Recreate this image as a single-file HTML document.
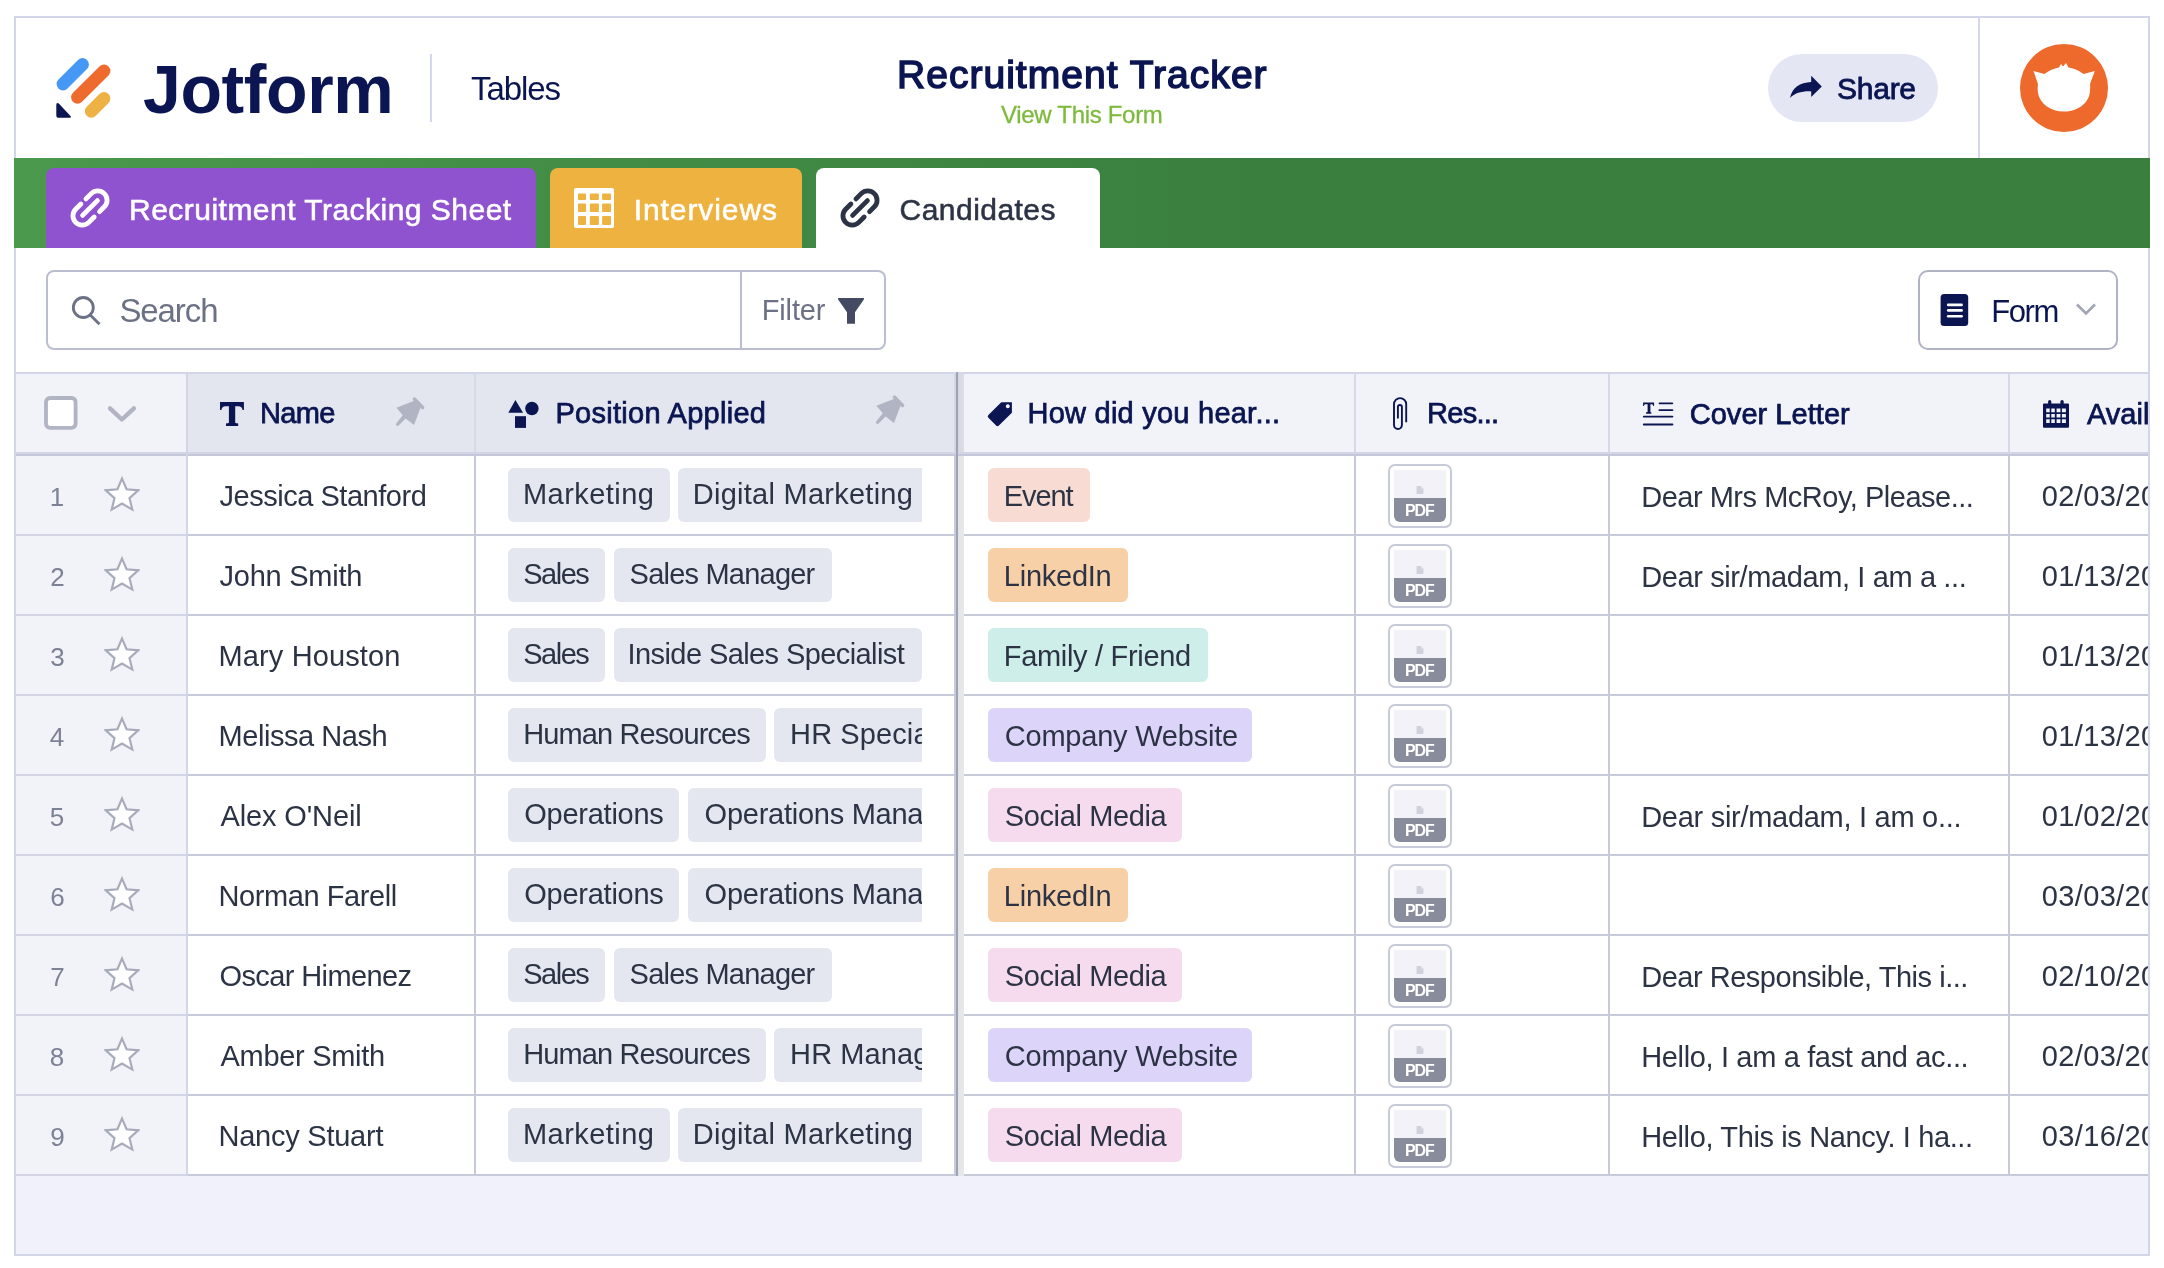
<!DOCTYPE html>
<html><head><meta charset="utf-8"><style>
html,body{margin:0;padding:0;width:2164px;height:1268px;overflow:hidden;background:#fff}
body{position:relative;font-family:"Liberation Sans",sans-serif}
.b{position:absolute}
.t{position:absolute;white-space:nowrap}
</style></head><body><div id="wrap" style="position:absolute;left:0;top:0;width:2164px;height:1268px;will-change:transform;background:#fff">
<div class="b" style="left:14px;top:16px;width:2136px;height:1240px;border:2px solid #d3d5e9;box-sizing:border-box;background:#fff"></div>
<svg class="b" style="left:50px;top:50px;" width="70" height="75" viewBox="50 50 70 75">
<line x1="63" y1="84" x2="82.5" y2="64.5" stroke="#4599f4" stroke-width="12.8" stroke-linecap="round"/>
<line x1="77.5" y1="97.3" x2="104" y2="71" stroke="#ee6b2d" stroke-width="12.8" stroke-linecap="round"/>
<line x1="91.3" y1="111.3" x2="104" y2="98.5" stroke="#eeb143" stroke-width="12.8" stroke-linecap="round"/>
<path d="M58.8,103.6 Q56.3,101.8 56.3,105 L56.3,115.2 Q56.3,117.8 59,117.8 L69,117.8 Q72.3,117.8 70,115.4 Z" fill="#0a1551"/>
</svg>
<div class="t" style="left:143.00px;top:55.40px;font-size:68px;line-height:68px;color:#0a1551;font-weight:700;letter-spacing:-0.383px;">Jotform</div>
<div class="b" style="left:430px;top:54px;width:2px;height:68px;background:#d5d8ec"></div>
<div class="t" style="left:471.00px;top:72.00px;font-size:33px;line-height:33px;color:#0a1551;font-weight:400;letter-spacing:-1.080px;">Tables</div>
<div class="t" style="left:897.00px;top:54.90px;font-size:39px;line-height:39px;color:#0a1551;font-weight:400;letter-spacing:1.028px;-webkit-text-stroke:1.5px #0a1551;">Recruitment Tracker</div>
<div class="t" style="left:1001.00px;top:103.40px;font-size:24px;line-height:24px;color:#7dba3c;font-weight:400;letter-spacing:-0.308px;-webkit-text-stroke:0.3px #7dba3c;">View This Form</div>
<div class="b" style="left:1768px;top:54px;width:170px;height:68px;background:#e4e6f4;border-radius:34px"></div>
<svg class="b" style="left:1780px;top:62px;" width="50" height="50" viewBox="0 0 50 50"><path d="M41.8,24.4 L31.2,13.8 L31.2,20.1 C20,20.5 12,26 10,36.1 C15,31 22,29 31.2,29.4 L31.2,34.9 Z" fill="#0a1551"/></svg>
<div class="t" style="left:1837.00px;top:74.00px;font-size:30px;line-height:30px;color:#0a1551;font-weight:400;letter-spacing:-0.250px;-webkit-text-stroke:0.8px #0a1551;">Share</div>
<div class="b" style="left:1978px;top:18px;width:2px;height:140px;background:#d5d8ec"></div>
<svg class="b" style="left:2014px;top:38px;" width="100" height="100" viewBox="0 0 100 100"><circle cx="50" cy="50" r="44" fill="#ed6a2c"/>
<path d="M19.5,33 L30.5,36 C36,32 41,30 45,29.5 L47,26 L49,28.5 L52,25 L54.5,29.5 C59,30 64,32 69.5,36 L80.8,33 L76,46 C76.5,49 76,52 75.8,55 C74,66 63,73.5 50,73.5 C37,73.5 26,66 24,55 C23.6,52 23.5,49 24,46 Z" fill="#fff"/></svg>
<div class="b" style="left:14px;top:158px;width:2136px;height:90px;background:linear-gradient(90deg,#4a994d 0px,#3a7f3e 1234px,#3a7f3e 100%)"></div>
<div class="b" style="left:46px;top:168px;width:490px;height:80px;background:#9053cf;border-radius:8px 8px 0 0"></div>
<div class="b" style="left:550px;top:168px;width:252px;height:80px;background:#eeb241;border-radius:8px 8px 0 0"></div>
<div class="b" style="left:816px;top:168px;width:284px;height:80px;background:#fff;border-radius:8px 8px 0 0"></div>
<svg class="b" style="left:64.8px;top:182.8px;" width="50" height="50" viewBox="0 0 50 50"><g transform="translate(25,25) rotate(-45)" fill="none" stroke="#fff" stroke-width="4.8" stroke-linecap="round">
<path d="M3.6,-9.3 L11,-9.3 A9.3,9.3 0 0 1 11,9.3 L4.2,9.3"/>
<path d="M-3.4,9.3 L-11,9.3 A9.3,9.3 0 0 1 -11,-9.3 L-3.6,-9.3"/>
<path d="M-10.5,0 L10.5,0"/></g></svg>
<div class="t" style="left:129.00px;top:195.00px;font-size:30px;line-height:30px;color:#fff;font-weight:400;letter-spacing:0.480px;-webkit-text-stroke:0.55px #fff;">Recruitment Tracking Sheet</div>
<svg class="b" style="left:574px;top:188px;" width="40" height="40" viewBox="0 0 40 40"><path fill="#fff" fill-rule="evenodd" d="M2,0 H38 A2,2 0 0 1 40,2 V38 A2,2 0 0 1 38,40 H2 A2,2 0 0 1 0,38 V2 A2,2 0 0 1 2,0 Z
M4,6.6 V11 A1,1 0 0 0 5,12 H11 A1,1 0 0 0 12,11 V6.6 A1,1 0 0 0 11,5.6 H5 A1,1 0 0 0 4,6.6 Z
M15.8,6.6 V11 A1,1 0 0 0 16.8,12 H23.9 A1,1 0 0 0 24.9,11 V6.6 A1,1 0 0 0 23.9,5.6 H16.8 A1,1 0 0 0 15.8,6.6 Z
M28.1,6.6 V11 A1,1 0 0 0 29.1,12 H36 A1,1 0 0 0 37,11 V6.6 A1,1 0 0 0 36,5.6 H29.1 A1,1 0 0 0 28.1,6.6 Z
M4,16.6 V23 A1,1 0 0 0 5,24 H11 A1,1 0 0 0 12,23 V16.6 A1,1 0 0 0 11,15.6 H5 A1,1 0 0 0 4,16.6 Z
M15.8,16.6 V23 A1,1 0 0 0 16.8,24 H23.9 A1,1 0 0 0 24.9,23 V16.6 A1,1 0 0 0 23.9,15.6 H16.8 A1,1 0 0 0 15.8,16.6 Z
M28.1,16.6 V23 A1,1 0 0 0 29.1,24 H36 A1,1 0 0 0 37,23 V16.6 A1,1 0 0 0 36,15.6 H29.1 A1,1 0 0 0 28.1,16.6 Z
M4,28.9 V36 A1,1 0 0 0 5,37 H11 A1,1 0 0 0 12,36 V28.9 A1,1 0 0 0 11,27.9 H5 A1,1 0 0 0 4,28.9 Z
M15.8,28.9 V36 A1,1 0 0 0 16.8,37 H23.9 A1,1 0 0 0 24.9,36 V28.9 A1,1 0 0 0 23.9,27.9 H16.8 A1,1 0 0 0 15.8,28.9 Z
M28.1,28.9 V36 A1,1 0 0 0 29.1,37 H36 A1,1 0 0 0 37,36 V28.9 A1,1 0 0 0 36,27.9 H29.1 A1,1 0 0 0 28.1,28.9 Z"/></svg>
<div class="t" style="left:633.70px;top:195.00px;font-size:30px;line-height:30px;color:#fff;font-weight:400;letter-spacing:0.922px;-webkit-text-stroke:0.55px #fff;">Interviews</div>
<svg class="b" style="left:835px;top:182.6px;" width="50" height="50" viewBox="0 0 50 50"><g transform="translate(25,25) rotate(-45)" fill="none" stroke="#2c3345" stroke-width="4.8" stroke-linecap="round">
<path d="M3.6,-9.3 L11,-9.3 A9.3,9.3 0 0 1 11,9.3 L4.2,9.3"/>
<path d="M-3.4,9.3 L-11,9.3 A9.3,9.3 0 0 1 -11,-9.3 L-3.6,-9.3"/>
<path d="M-10.5,0 L10.5,0"/></g></svg>
<div class="t" style="left:899.60px;top:195.00px;font-size:30px;line-height:30px;color:#2c3345;font-weight:400;letter-spacing:0.456px;-webkit-text-stroke:0.55px #2c3345;">Candidates</div>
<div class="b" style="left:46px;top:270px;width:840px;height:80px;border:2px solid #babed0;border-radius:8px;box-sizing:border-box;background:#fff"></div>
<div class="b" style="left:740px;top:272px;width:2px;height:76px;background:#babed0"></div>
<svg class="b" style="left:60px;top:285px;" width="50" height="50" viewBox="0 0 50 50"><circle cx="23.3" cy="22.5" r="10" fill="none" stroke="#6c7186" stroke-width="2.8"/><line x1="30.5" y1="30.2" x2="39.5" y2="39.2" stroke="#6c7186" stroke-width="2.8"/></svg>
<div class="t" style="left:119.40px;top:294.00px;font-size:33px;line-height:33px;color:#6c7186;font-weight:400;letter-spacing:-1.080px;">Search</div>
<div class="t" style="left:761.70px;top:295.80px;font-size:29px;line-height:29px;color:#6c7186;font-weight:400;letter-spacing:-0.120px;">Filter</div>
<svg class="b" style="left:830px;top:285px;" width="50" height="50" viewBox="0 0 50 50"><path d="M8.1,13 H33.9 V14.6 L25,27.2 V38.8 H17 V27.2 L8.1,14.6 Z" fill="#444a62"/></svg>
<div class="b" style="left:1918px;top:270px;width:200px;height:80px;border:2px solid #b0b3c4;border-radius:10px;box-sizing:border-box;background:#fff"></div>
<svg class="b" style="left:1940px;top:294px;" width="30" height="33" viewBox="0 0 30 33"><rect x="0.6" y="0" width="27.6" height="32" rx="3.5" fill="#0a1551"/><g stroke="#fff" stroke-width="2.6" stroke-linecap="round"><line x1="8.2" y1="10.9" x2="21.6" y2="10.9"/><line x1="8.2" y1="16.4" x2="21.6" y2="16.4"/><line x1="8.2" y1="22.2" x2="21.6" y2="22.2"/></g></svg>
<div class="t" style="left:1991.30px;top:295.80px;font-size:31px;line-height:31px;color:#0a1551;font-weight:400;letter-spacing:-1.433px;">Form</div>
<svg class="b" style="left:2070px;top:298px;" width="32" height="22" viewBox="0 0 32 22"><polyline points="7,6.5 16,15.5 25,6.5" fill="none" stroke="#a0a4b4" stroke-width="2.6"/></svg>
<div class="b" style="left:14px;top:372px;width:2136px;height:2px;background:#d3d5e9"></div>
<div class="b" style="left:16px;top:374px;width:170px;height:78px;background:#f2f3f9"></div>
<div class="b" style="left:188px;top:374px;width:766px;height:78px;background:#e3e6ef"></div>
<div class="b" style="left:958px;top:374px;width:1190px;height:78px;background:#f2f3f9"></div>
<div class="b" style="left:16px;top:452px;width:2132px;height:2px;background:#d3d5e6"></div>
<div class="b" style="left:16px;top:454px;width:2132px;height:2px;background:#c5c8d8"></div>
<div class="b" style="left:16px;top:456px;width:170px;height:718px;background:#f2f3f9"></div>
<div class="b" style="left:188px;top:456px;width:1960px;height:718px;background:#fff"></div>
<div class="b" style="left:16px;top:1176px;width:2132px;height:78px;background:#f1f1fb"></div>
<div class="b" style="left:16px;top:534px;width:170px;height:2px;background:#d3d5e6"></div>
<div class="b" style="left:186px;top:534px;width:1962px;height:2px;background:#c6cad9"></div>
<div class="b" style="left:16px;top:614px;width:170px;height:2px;background:#d3d5e6"></div>
<div class="b" style="left:186px;top:614px;width:1962px;height:2px;background:#c6cad9"></div>
<div class="b" style="left:16px;top:694px;width:170px;height:2px;background:#d3d5e6"></div>
<div class="b" style="left:186px;top:694px;width:1962px;height:2px;background:#c6cad9"></div>
<div class="b" style="left:16px;top:774px;width:170px;height:2px;background:#d3d5e6"></div>
<div class="b" style="left:186px;top:774px;width:1962px;height:2px;background:#c6cad9"></div>
<div class="b" style="left:16px;top:854px;width:170px;height:2px;background:#d3d5e6"></div>
<div class="b" style="left:186px;top:854px;width:1962px;height:2px;background:#c6cad9"></div>
<div class="b" style="left:16px;top:934px;width:170px;height:2px;background:#d3d5e6"></div>
<div class="b" style="left:186px;top:934px;width:1962px;height:2px;background:#c6cad9"></div>
<div class="b" style="left:16px;top:1014px;width:170px;height:2px;background:#d3d5e6"></div>
<div class="b" style="left:186px;top:1014px;width:1962px;height:2px;background:#c6cad9"></div>
<div class="b" style="left:16px;top:1094px;width:170px;height:2px;background:#d3d5e6"></div>
<div class="b" style="left:186px;top:1094px;width:1962px;height:2px;background:#c6cad9"></div>
<div class="b" style="left:16px;top:1174px;width:170px;height:2px;background:#d3d5e6"></div>
<div class="b" style="left:186px;top:1174px;width:1962px;height:2px;background:#c6cad9"></div>
<div class="b" style="left:186px;top:374px;width:2px;height:802px;background:#d3d5e6"></div>
<div class="b" style="left:474px;top:374px;width:2px;height:78px;background:#d7d9ea"></div>
<div class="b" style="left:474px;top:456px;width:2px;height:720px;background:#c6cad9"></div>
<div class="b" style="left:1354px;top:374px;width:2px;height:78px;background:#d7d9ea"></div>
<div class="b" style="left:1354px;top:456px;width:2px;height:720px;background:#c6cad9"></div>
<div class="b" style="left:1608px;top:374px;width:2px;height:78px;background:#d7d9ea"></div>
<div class="b" style="left:1608px;top:456px;width:2px;height:720px;background:#c6cad9"></div>
<div class="b" style="left:2008px;top:374px;width:2px;height:78px;background:#d7d9ea"></div>
<div class="b" style="left:2008px;top:456px;width:2px;height:720px;background:#c6cad9"></div>
<div class="b" style="left:954px;top:374px;width:2px;height:78px;background:#d3d5e6"></div>
<div class="b" style="left:954px;top:456px;width:2px;height:720px;background:#c6cad9"></div>
<div class="b" style="left:956px;top:372px;width:2px;height:804px;background:#9ea2b2"></div>
<div class="b" style="left:958px;top:374px;width:6px;height:78px;background:linear-gradient(90deg,#d6d7e1,#dcdde6)"></div>
<div class="b" style="left:958px;top:456px;width:6px;height:720px;background:linear-gradient(90deg,#e4e4e6,#e8e8ea)"></div>
<svg class="b" style="left:36px;top:388px;" width="50" height="50" viewBox="0 0 50 50"><rect x="10" y="10" width="29.6" height="29.8" rx="4" fill="#fff" stroke="#b1b4c3" stroke-width="3.8"/></svg>
<svg class="b" style="left:100px;top:398px;" width="44" height="30" viewBox="0 0 44 30"><polyline points="10,10.3 21.9,21.5 33.9,10.3" fill="none" stroke="#b1b4c3" stroke-width="4.4" stroke-linecap="round" stroke-linejoin="round"/></svg>
<svg class="b" style="left:210px;top:390px;" width="50" height="50" viewBox="0 0 50 50"><path fill="#0a1551" d="M10,12 H33.9 V19.9 H32.6 C32,17.5 31,16.3 28.5,16.3 H25.2 V32.6 C25.6,33.2 26.8,33.4 28.2,33.5 V35.9 H16 V33.5 C17.4,33.4 18.6,33.2 18.9,32.6 V16.3 H15.4 C13,16.3 12,17.5 11.3,19.9 H10 Z"/></svg>
<div class="t" style="left:260.00px;top:399.00px;font-size:29px;line-height:29px;color:#0a1551;font-weight:400;letter-spacing:-0.667px;-webkit-text-stroke:0.75px #0a1551;">Name</div>
<svg class="b" style="left:385px;top:388px;" width="50" height="50" viewBox="0 0 50 50"><path d="M11.4,19.7 L29.9,12.6 L36,18.6 L29,37 L20.6,30.6 L13.6,37.4 Q12.3,38.4 11.3,37.3 Q10.5,36.2 11.5,35.1 L17.8,27.3 Z" fill="#b1b4c3"/><line x1="29.4" y1="11" x2="37.6" y2="19.5" stroke="#b1b4c3" stroke-width="3.4" stroke-linecap="round"/></svg>
<svg class="b" style="left:500px;top:390px;" width="50" height="50" viewBox="0 0 50 50"><path d="M15.4,10 L23.1,22.7 H8.3 Z" fill="#0a1551"/><circle cx="31.9" cy="18.5" r="6.7" fill="#0a1551"/><rect x="15" y="26.2" width="11" height="11.7" fill="#0a1551"/></svg>
<div class="t" style="left:555.40px;top:399.30px;font-size:29px;line-height:29px;color:#0a1551;font-weight:400;letter-spacing:0.280px;-webkit-text-stroke:0.75px #0a1551;">Position Applied</div>
<svg class="b" style="left:865px;top:386px;" width="50" height="50" viewBox="0 0 50 50"><path d="M11.4,19.7 L29.9,12.6 L36,18.6 L29,37 L20.6,30.6 L13.6,37.4 Q12.3,38.4 11.3,37.3 Q10.5,36.2 11.5,35.1 L17.8,27.3 Z" fill="#b1b4c3"/><line x1="29.4" y1="11" x2="37.6" y2="19.5" stroke="#b1b4c3" stroke-width="3.4" stroke-linecap="round"/></svg>
<svg class="b" style="left:980px;top:390px;" width="50" height="50" viewBox="0 0 50 50"><path fill="#0a1551" fill-rule="evenodd" d="M21.3,12.2 H31.9 V22.7 L18.9,35.5 Q17.5,36.9 16.1,35.5 L8.4,27.7 Q7,26.3 8.4,24.9 Z M27.8,14.2 A2,2 0 1 0 27.81,14.2 Z"/></svg>
<div class="t" style="left:1027.50px;top:398.90px;font-size:29px;line-height:29px;color:#0a1551;font-weight:400;letter-spacing:0.239px;-webkit-text-stroke:0.75px #0a1551;">How did you hear...</div>
<svg class="b" style="left:1380px;top:390px;" width="50" height="50" viewBox="0 0 50 50"><path d="M26.2,32.3 L26.2,14.2 A6.1,6.1 0 0 0 14,14.2 L14,35.1 A3.95,3.95 0 0 0 21.9,35.1 L21.9,17 A2,2 0 0 0 17.9,17 L17.9,28.4" fill="none" stroke="#0a1551" stroke-width="1.9"/></svg>
<div class="t" style="left:1427.00px;top:398.90px;font-size:29px;line-height:29px;color:#0a1551;font-weight:400;letter-spacing:-0.720px;-webkit-text-stroke:0.75px #0a1551;">Res...</div>
<svg class="b" style="left:1635px;top:390px;" width="50" height="50" viewBox="0 0 50 50"><path fill="#0a1551" d="M8.1,12.4 H19.1 V16 H18.4 C18,14.6 17.4,14.2 16.2,14.2 H15.4 V21.9 C15.6,22.2 16,22.3 16.4,22.4 V23.7 H11 V22.4 C11.4,22.3 11.9,22.2 12.6,21.9 V14.2 H11 C9.8,14.2 9.2,14.6 8.8,16 H8.1 Z"/><g stroke="#0a1551" stroke-linecap="round"><line x1="24.4" y1="13.4" x2="37.4" y2="13.4" stroke-width="1.6"/><line x1="24.4" y1="20.1" x2="37.4" y2="20.1" stroke-width="1.9"/><line x1="8.8" y1="26.6" x2="37.4" y2="26.6" stroke-width="1.9"/><line x1="8.8" y1="34.5" x2="37.4" y2="34.5" stroke-width="1.9"/></g></svg>
<div class="t" style="left:1689.70px;top:399.50px;font-size:29px;line-height:29px;color:#0a1551;font-weight:400;letter-spacing:0.045px;-webkit-text-stroke:0.75px #0a1551;">Cover Letter</div>
<svg class="b" style="left:2030px;top:390px;" width="50" height="50" viewBox="0 0 50 50"><path fill="#0a1551" fill-rule="evenodd" d="M14,13.4 H38 A1,1 0 0 1 39,14.4 V36.7 A1,1 0 0 1 38,37.7 H14 A1,1 0 0 1 13,36.7 V14.4 A1,1 0 0 1 14,13.4 Z
M16.2,18.5 H19.7 V22.3 H16.2 Z M21.3,18.5 H24.8 V22.3 H21.3 Z M26.6,18.5 H30.4 V22.3 H26.6 Z M31.9,18.5 H35.9 V22.3 H31.9 Z
M16.2,23.9 H19.7 V27.6 H16.2 Z M21.3,23.9 H24.8 V27.6 H21.3 Z M26.6,23.9 H30.4 V27.6 H26.6 Z M31.9,23.9 H35.9 V27.6 H31.9 Z
M16.2,29.2 H19.7 V32.9 H16.2 Z M21.3,29.2 H24.8 V32.9 H21.3 Z M26.6,29.2 H30.4 V32.9 H26.6 Z M31.9,29.2 H35.9 V32.9 H31.9 Z"/>
<rect x="18.1" y="10" width="3.2" height="5" rx="1.6" fill="#0a1551"/><rect x="30.4" y="10" width="3.3" height="5" rx="1.6" fill="#0a1551"/></svg>
<div class="b" style="left:2010px;top:374px;width:138px;height:78px;overflow:hidden"><div class="b" style="left:-2010px;top:-374px;width:2164px;height:1268px"><div class="t" style="left:2087.00px;top:399.50px;font-size:29px;line-height:29px;color:#0a1551;font-weight:400;letter-spacing:0.000px;-webkit-text-stroke:0.75px #0a1551;">Availability</div></div></div>
<div class="t" style="left:49.80px;top:483.80px;font-size:26px;line-height:26px;color:#7d8195;font-weight:400;letter-spacing:0.000px;">1</div>
<svg class="b" style="left:104px;top:475.7px;" width="36" height="36" viewBox="0 0 36 36"><path d="M18,2.6 L22.6,13.3 L34.3,14.3 L25.5,22.2 L28.3,33.6 L18,27.6 L7.7,33.6 L10.5,22.2 L1.7,14.3 L13.4,13.3 Z" fill="#fff" stroke="#a8abbb" stroke-width="2.2"/></svg>
<div class="t" style="left:219.50px;top:482.00px;font-size:29px;line-height:29px;color:#2c3345;font-weight:400;letter-spacing:-0.473px;">Jessica Stanford</div>
<div class="b" style="left:508px;top:468px;width:162px;height:54px;background:#e4e7f0;border-radius:6px"></div>
<div class="b" style="left:508px;top:468px;width:162px;height:54px;overflow:hidden"><div class="b" style="left:-508px;top:-468px;width:2164px;height:1268px"><div class="t" style="left:523.00px;top:480.20px;font-size:29px;line-height:29px;color:#2c3345;font-weight:400;letter-spacing:0.438px;">Marketing</div></div></div>
<div class="b" style="left:678px;top:468px;width:244px;height:54px;background:#e4e7f0;border-radius:6px 0 0 6px"></div>
<div class="b" style="left:678px;top:468px;width:244px;height:54px;overflow:hidden"><div class="b" style="left:-678px;top:-468px;width:2164px;height:1268px"><div class="t" style="left:692.80px;top:480.20px;font-size:29px;line-height:29px;color:#2c3345;font-weight:400;letter-spacing:0.256px;">Digital Marketing Manager</div></div></div>
<div class="b" style="left:988px;top:468px;width:102px;height:54px;background:#f8dcd3;border-radius:6px"></div>
<div class="t" style="left:1003.80px;top:482.00px;font-size:29px;line-height:29px;color:#2c3345;font-weight:400;letter-spacing:-1.075px;">Event</div>
<div class="b" style="left:1388px;top:464px;width:64px;height:64px;border:2px solid #c6cada;border-radius:7px;box-sizing:border-box;background:#fff;overflow:hidden">
<div class="b" style="left:4px;top:4px;width:52px;height:28px;background:#f2f2f8"></div>
<div class="b" style="left:4px;top:32px;width:52px;height:24px;background:#898d9b;border-radius:0 0 6px 6px"></div>
<svg class="b" style="left:24.6px;top:18px" width="10" height="12" viewBox="0 0 10 12"><path d="M1.6,2 H6 L8.4,4.4 V10 H1.6 Z" fill="#d0d1da"/><path d="M6,2 V4.4 H8.4 Z" fill="#e9e9ef"/></svg></div>
<div class="t" style="left:1405.00px;top:502.60px;font-size:16px;line-height:16px;color:#fff;font-weight:700;letter-spacing:-1.150px;">PDF</div>
<div class="t" style="left:1641.20px;top:482.50px;font-size:29px;line-height:29px;color:#2c3345;font-weight:400;letter-spacing:-0.483px;">Dear Mrs McRoy, Please...</div>
<div class="b" style="left:2010px;top:456px;width:138px;height:78px;overflow:hidden"><div class="b" style="left:-2010px;top:-456px;width:2164px;height:1268px"><div class="t" style="left:2041.80px;top:482.00px;font-size:29px;line-height:29px;color:#2c3345;font-weight:400;letter-spacing:0.350px;">02/03/2020</div></div></div>
<div class="t" style="left:50.30px;top:563.80px;font-size:26px;line-height:26px;color:#7d8195;font-weight:400;letter-spacing:0.000px;">2</div>
<svg class="b" style="left:104px;top:555.7px;" width="36" height="36" viewBox="0 0 36 36"><path d="M18,2.6 L22.6,13.3 L34.3,14.3 L25.5,22.2 L28.3,33.6 L18,27.6 L7.7,33.6 L10.5,22.2 L1.7,14.3 L13.4,13.3 Z" fill="#fff" stroke="#a8abbb" stroke-width="2.2"/></svg>
<div class="t" style="left:219.50px;top:562.00px;font-size:29px;line-height:29px;color:#2c3345;font-weight:400;letter-spacing:-0.244px;">John Smith</div>
<div class="b" style="left:508px;top:548px;width:97px;height:54px;background:#e4e7f0;border-radius:6px"></div>
<div class="b" style="left:508px;top:548px;width:97px;height:54px;overflow:hidden"><div class="b" style="left:-508px;top:-548px;width:2164px;height:1268px"><div class="t" style="left:523.30px;top:560.20px;font-size:29px;line-height:29px;color:#2c3345;font-weight:400;letter-spacing:-1.525px;">Sales</div></div></div>
<div class="b" style="left:614px;top:548px;width:218px;height:54px;background:#e4e7f0;border-radius:6px"></div>
<div class="b" style="left:614px;top:548px;width:218px;height:54px;overflow:hidden"><div class="b" style="left:-614px;top:-548px;width:2164px;height:1268px"><div class="t" style="left:629.60px;top:560.20px;font-size:29px;line-height:29px;color:#2c3345;font-weight:400;letter-spacing:-0.783px;">Sales Manager</div></div></div>
<div class="b" style="left:988px;top:548px;width:140px;height:54px;background:#f7d0a7;border-radius:6px"></div>
<div class="t" style="left:1003.80px;top:562.00px;font-size:29px;line-height:29px;color:#2c3345;font-weight:400;letter-spacing:-0.243px;">LinkedIn</div>
<div class="b" style="left:1388px;top:544px;width:64px;height:64px;border:2px solid #c6cada;border-radius:7px;box-sizing:border-box;background:#fff;overflow:hidden">
<div class="b" style="left:4px;top:4px;width:52px;height:28px;background:#f2f2f8"></div>
<div class="b" style="left:4px;top:32px;width:52px;height:24px;background:#898d9b;border-radius:0 0 6px 6px"></div>
<svg class="b" style="left:24.6px;top:18px" width="10" height="12" viewBox="0 0 10 12"><path d="M1.6,2 H6 L8.4,4.4 V10 H1.6 Z" fill="#d0d1da"/><path d="M6,2 V4.4 H8.4 Z" fill="#e9e9ef"/></svg></div>
<div class="t" style="left:1405.00px;top:582.60px;font-size:16px;line-height:16px;color:#fff;font-weight:700;letter-spacing:-1.150px;">PDF</div>
<div class="t" style="left:1641.20px;top:562.50px;font-size:29px;line-height:29px;color:#2c3345;font-weight:400;letter-spacing:-0.388px;">Dear sir/madam, I am a ...</div>
<div class="b" style="left:2010px;top:536px;width:138px;height:78px;overflow:hidden"><div class="b" style="left:-2010px;top:-536px;width:2164px;height:1268px"><div class="t" style="left:2041.80px;top:562.00px;font-size:29px;line-height:29px;color:#2c3345;font-weight:400;letter-spacing:0.350px;">01/13/2020</div></div></div>
<div class="t" style="left:50.30px;top:643.80px;font-size:26px;line-height:26px;color:#7d8195;font-weight:400;letter-spacing:0.000px;">3</div>
<svg class="b" style="left:104px;top:635.7px;" width="36" height="36" viewBox="0 0 36 36"><path d="M18,2.6 L22.6,13.3 L34.3,14.3 L25.5,22.2 L28.3,33.6 L18,27.6 L7.7,33.6 L10.5,22.2 L1.7,14.3 L13.4,13.3 Z" fill="#fff" stroke="#a8abbb" stroke-width="2.2"/></svg>
<div class="t" style="left:218.50px;top:642.00px;font-size:29px;line-height:29px;color:#2c3345;font-weight:400;letter-spacing:0.127px;">Mary Houston</div>
<div class="b" style="left:508px;top:628px;width:97px;height:54px;background:#e4e7f0;border-radius:6px"></div>
<div class="b" style="left:508px;top:628px;width:97px;height:54px;overflow:hidden"><div class="b" style="left:-508px;top:-628px;width:2164px;height:1268px"><div class="t" style="left:523.30px;top:640.20px;font-size:29px;line-height:29px;color:#2c3345;font-weight:400;letter-spacing:-1.525px;">Sales</div></div></div>
<div class="b" style="left:614px;top:628px;width:308px;height:54px;background:#e4e7f0;border-radius:6px"></div>
<div class="b" style="left:614px;top:628px;width:308px;height:54px;overflow:hidden"><div class="b" style="left:-614px;top:-628px;width:2164px;height:1268px"><div class="t" style="left:627.60px;top:640.20px;font-size:29px;line-height:29px;color:#2c3345;font-weight:400;letter-spacing:-0.591px;">Inside Sales Specialist</div></div></div>
<div class="b" style="left:988px;top:628px;width:220px;height:54px;background:#cdeee9;border-radius:6px"></div>
<div class="t" style="left:1003.80px;top:642.00px;font-size:29px;line-height:29px;color:#2c3345;font-weight:400;letter-spacing:-0.314px;">Family / Friend</div>
<div class="b" style="left:1388px;top:624px;width:64px;height:64px;border:2px solid #c6cada;border-radius:7px;box-sizing:border-box;background:#fff;overflow:hidden">
<div class="b" style="left:4px;top:4px;width:52px;height:28px;background:#f2f2f8"></div>
<div class="b" style="left:4px;top:32px;width:52px;height:24px;background:#898d9b;border-radius:0 0 6px 6px"></div>
<svg class="b" style="left:24.6px;top:18px" width="10" height="12" viewBox="0 0 10 12"><path d="M1.6,2 H6 L8.4,4.4 V10 H1.6 Z" fill="#d0d1da"/><path d="M6,2 V4.4 H8.4 Z" fill="#e9e9ef"/></svg></div>
<div class="t" style="left:1405.00px;top:662.60px;font-size:16px;line-height:16px;color:#fff;font-weight:700;letter-spacing:-1.150px;">PDF</div>
<div class="b" style="left:2010px;top:616px;width:138px;height:78px;overflow:hidden"><div class="b" style="left:-2010px;top:-616px;width:2164px;height:1268px"><div class="t" style="left:2041.80px;top:642.00px;font-size:29px;line-height:29px;color:#2c3345;font-weight:400;letter-spacing:0.350px;">01/13/2020</div></div></div>
<div class="t" style="left:49.80px;top:723.80px;font-size:26px;line-height:26px;color:#7d8195;font-weight:400;letter-spacing:0.000px;">4</div>
<svg class="b" style="left:104px;top:715.7px;" width="36" height="36" viewBox="0 0 36 36"><path d="M18,2.6 L22.6,13.3 L34.3,14.3 L25.5,22.2 L28.3,33.6 L18,27.6 L7.7,33.6 L10.5,22.2 L1.7,14.3 L13.4,13.3 Z" fill="#fff" stroke="#a8abbb" stroke-width="2.2"/></svg>
<div class="t" style="left:218.50px;top:722.00px;font-size:29px;line-height:29px;color:#2c3345;font-weight:400;letter-spacing:-0.445px;">Melissa Nash</div>
<div class="b" style="left:508px;top:708px;width:258px;height:54px;background:#e4e7f0;border-radius:6px"></div>
<div class="b" style="left:508px;top:708px;width:258px;height:54px;overflow:hidden"><div class="b" style="left:-508px;top:-708px;width:2164px;height:1268px"><div class="t" style="left:523.30px;top:720.20px;font-size:29px;line-height:29px;color:#2c3345;font-weight:400;letter-spacing:-0.907px;">Human Resources</div></div></div>
<div class="b" style="left:774px;top:708px;width:148px;height:54px;background:#e4e7f0;border-radius:6px 0 0 6px"></div>
<div class="b" style="left:774px;top:708px;width:148px;height:54px;overflow:hidden"><div class="b" style="left:-774px;top:-708px;width:2164px;height:1268px"><div class="t" style="left:790.10px;top:720.20px;font-size:29px;line-height:29px;color:#2c3345;font-weight:400;letter-spacing:0.100px;">HR Specialist</div></div></div>
<div class="b" style="left:988px;top:708px;width:264px;height:54px;background:#ddd4f9;border-radius:6px"></div>
<div class="t" style="left:1004.80px;top:722.00px;font-size:29px;line-height:29px;color:#2c3345;font-weight:400;letter-spacing:-0.221px;">Company Website</div>
<div class="b" style="left:1388px;top:704px;width:64px;height:64px;border:2px solid #c6cada;border-radius:7px;box-sizing:border-box;background:#fff;overflow:hidden">
<div class="b" style="left:4px;top:4px;width:52px;height:28px;background:#f2f2f8"></div>
<div class="b" style="left:4px;top:32px;width:52px;height:24px;background:#898d9b;border-radius:0 0 6px 6px"></div>
<svg class="b" style="left:24.6px;top:18px" width="10" height="12" viewBox="0 0 10 12"><path d="M1.6,2 H6 L8.4,4.4 V10 H1.6 Z" fill="#d0d1da"/><path d="M6,2 V4.4 H8.4 Z" fill="#e9e9ef"/></svg></div>
<div class="t" style="left:1405.00px;top:742.60px;font-size:16px;line-height:16px;color:#fff;font-weight:700;letter-spacing:-1.150px;">PDF</div>
<div class="b" style="left:2010px;top:696px;width:138px;height:78px;overflow:hidden"><div class="b" style="left:-2010px;top:-696px;width:2164px;height:1268px"><div class="t" style="left:2041.80px;top:722.00px;font-size:29px;line-height:29px;color:#2c3345;font-weight:400;letter-spacing:0.350px;">01/13/2020</div></div></div>
<div class="t" style="left:49.80px;top:803.80px;font-size:26px;line-height:26px;color:#7d8195;font-weight:400;letter-spacing:0.000px;">5</div>
<svg class="b" style="left:104px;top:795.7px;" width="36" height="36" viewBox="0 0 36 36"><path d="M18,2.6 L22.6,13.3 L34.3,14.3 L25.5,22.2 L28.3,33.6 L18,27.6 L7.7,33.6 L10.5,22.2 L1.7,14.3 L13.4,13.3 Z" fill="#fff" stroke="#a8abbb" stroke-width="2.2"/></svg>
<div class="t" style="left:220.50px;top:802.00px;font-size:29px;line-height:29px;color:#2c3345;font-weight:400;letter-spacing:-0.140px;">Alex O'Neil</div>
<div class="b" style="left:508px;top:788px;width:171px;height:54px;background:#e4e7f0;border-radius:6px"></div>
<div class="b" style="left:508px;top:788px;width:171px;height:54px;overflow:hidden"><div class="b" style="left:-508px;top:-788px;width:2164px;height:1268px"><div class="t" style="left:524.30px;top:800.20px;font-size:29px;line-height:29px;color:#2c3345;font-weight:400;letter-spacing:-0.256px;">Operations</div></div></div>
<div class="b" style="left:688px;top:788px;width:234px;height:54px;background:#e4e7f0;border-radius:6px 0 0 6px"></div>
<div class="b" style="left:688px;top:788px;width:234px;height:54px;overflow:hidden"><div class="b" style="left:-688px;top:-788px;width:2164px;height:1268px"><div class="t" style="left:704.60px;top:800.20px;font-size:29px;line-height:29px;color:#2c3345;font-weight:400;letter-spacing:-0.256px;">Operations Manager</div></div></div>
<div class="b" style="left:988px;top:788px;width:194px;height:54px;background:#f6dbef;border-radius:6px"></div>
<div class="t" style="left:1004.80px;top:802.00px;font-size:29px;line-height:29px;color:#2c3345;font-weight:400;letter-spacing:-0.382px;">Social Media</div>
<div class="b" style="left:1388px;top:784px;width:64px;height:64px;border:2px solid #c6cada;border-radius:7px;box-sizing:border-box;background:#fff;overflow:hidden">
<div class="b" style="left:4px;top:4px;width:52px;height:28px;background:#f2f2f8"></div>
<div class="b" style="left:4px;top:32px;width:52px;height:24px;background:#898d9b;border-radius:0 0 6px 6px"></div>
<svg class="b" style="left:24.6px;top:18px" width="10" height="12" viewBox="0 0 10 12"><path d="M1.6,2 H6 L8.4,4.4 V10 H1.6 Z" fill="#d0d1da"/><path d="M6,2 V4.4 H8.4 Z" fill="#e9e9ef"/></svg></div>
<div class="t" style="left:1405.00px;top:822.60px;font-size:16px;line-height:16px;color:#fff;font-weight:700;letter-spacing:-1.150px;">PDF</div>
<div class="t" style="left:1641.20px;top:802.50px;font-size:29px;line-height:29px;color:#2c3345;font-weight:400;letter-spacing:-0.283px;">Dear sir/madam, I am o...</div>
<div class="b" style="left:2010px;top:776px;width:138px;height:78px;overflow:hidden"><div class="b" style="left:-2010px;top:-776px;width:2164px;height:1268px"><div class="t" style="left:2041.80px;top:802.00px;font-size:29px;line-height:29px;color:#2c3345;font-weight:400;letter-spacing:0.350px;">01/02/2020</div></div></div>
<div class="t" style="left:50.30px;top:883.80px;font-size:26px;line-height:26px;color:#7d8195;font-weight:400;letter-spacing:0.000px;">6</div>
<svg class="b" style="left:104px;top:875.7px;" width="36" height="36" viewBox="0 0 36 36"><path d="M18,2.6 L22.6,13.3 L34.3,14.3 L25.5,22.2 L28.3,33.6 L18,27.6 L7.7,33.6 L10.5,22.2 L1.7,14.3 L13.4,13.3 Z" fill="#fff" stroke="#a8abbb" stroke-width="2.2"/></svg>
<div class="t" style="left:218.50px;top:882.00px;font-size:29px;line-height:29px;color:#2c3345;font-weight:400;letter-spacing:-0.425px;">Norman Farell</div>
<div class="b" style="left:508px;top:868px;width:171px;height:54px;background:#e4e7f0;border-radius:6px"></div>
<div class="b" style="left:508px;top:868px;width:171px;height:54px;overflow:hidden"><div class="b" style="left:-508px;top:-868px;width:2164px;height:1268px"><div class="t" style="left:524.30px;top:880.20px;font-size:29px;line-height:29px;color:#2c3345;font-weight:400;letter-spacing:-0.256px;">Operations</div></div></div>
<div class="b" style="left:688px;top:868px;width:234px;height:54px;background:#e4e7f0;border-radius:6px 0 0 6px"></div>
<div class="b" style="left:688px;top:868px;width:234px;height:54px;overflow:hidden"><div class="b" style="left:-688px;top:-868px;width:2164px;height:1268px"><div class="t" style="left:704.60px;top:880.20px;font-size:29px;line-height:29px;color:#2c3345;font-weight:400;letter-spacing:-0.256px;">Operations Manager</div></div></div>
<div class="b" style="left:988px;top:868px;width:140px;height:54px;background:#f7d0a7;border-radius:6px"></div>
<div class="t" style="left:1003.80px;top:882.00px;font-size:29px;line-height:29px;color:#2c3345;font-weight:400;letter-spacing:-0.243px;">LinkedIn</div>
<div class="b" style="left:1388px;top:864px;width:64px;height:64px;border:2px solid #c6cada;border-radius:7px;box-sizing:border-box;background:#fff;overflow:hidden">
<div class="b" style="left:4px;top:4px;width:52px;height:28px;background:#f2f2f8"></div>
<div class="b" style="left:4px;top:32px;width:52px;height:24px;background:#898d9b;border-radius:0 0 6px 6px"></div>
<svg class="b" style="left:24.6px;top:18px" width="10" height="12" viewBox="0 0 10 12"><path d="M1.6,2 H6 L8.4,4.4 V10 H1.6 Z" fill="#d0d1da"/><path d="M6,2 V4.4 H8.4 Z" fill="#e9e9ef"/></svg></div>
<div class="t" style="left:1405.00px;top:902.60px;font-size:16px;line-height:16px;color:#fff;font-weight:700;letter-spacing:-1.150px;">PDF</div>
<div class="b" style="left:2010px;top:856px;width:138px;height:78px;overflow:hidden"><div class="b" style="left:-2010px;top:-856px;width:2164px;height:1268px"><div class="t" style="left:2041.80px;top:882.00px;font-size:29px;line-height:29px;color:#2c3345;font-weight:400;letter-spacing:0.350px;">03/03/2020</div></div></div>
<div class="t" style="left:50.30px;top:963.80px;font-size:26px;line-height:26px;color:#7d8195;font-weight:400;letter-spacing:0.000px;">7</div>
<svg class="b" style="left:104px;top:955.7px;" width="36" height="36" viewBox="0 0 36 36"><path d="M18,2.6 L22.6,13.3 L34.3,14.3 L25.5,22.2 L28.3,33.6 L18,27.6 L7.7,33.6 L10.5,22.2 L1.7,14.3 L13.4,13.3 Z" fill="#fff" stroke="#a8abbb" stroke-width="2.2"/></svg>
<div class="t" style="left:219.50px;top:962.00px;font-size:29px;line-height:29px;color:#2c3345;font-weight:400;letter-spacing:-0.608px;">Oscar Himenez</div>
<div class="b" style="left:508px;top:948px;width:97px;height:54px;background:#e4e7f0;border-radius:6px"></div>
<div class="b" style="left:508px;top:948px;width:97px;height:54px;overflow:hidden"><div class="b" style="left:-508px;top:-948px;width:2164px;height:1268px"><div class="t" style="left:523.30px;top:960.20px;font-size:29px;line-height:29px;color:#2c3345;font-weight:400;letter-spacing:-1.525px;">Sales</div></div></div>
<div class="b" style="left:614px;top:948px;width:218px;height:54px;background:#e4e7f0;border-radius:6px"></div>
<div class="b" style="left:614px;top:948px;width:218px;height:54px;overflow:hidden"><div class="b" style="left:-614px;top:-948px;width:2164px;height:1268px"><div class="t" style="left:629.60px;top:960.20px;font-size:29px;line-height:29px;color:#2c3345;font-weight:400;letter-spacing:-0.783px;">Sales Manager</div></div></div>
<div class="b" style="left:988px;top:948px;width:194px;height:54px;background:#f6dbef;border-radius:6px"></div>
<div class="t" style="left:1004.80px;top:962.00px;font-size:29px;line-height:29px;color:#2c3345;font-weight:400;letter-spacing:-0.382px;">Social Media</div>
<div class="b" style="left:1388px;top:944px;width:64px;height:64px;border:2px solid #c6cada;border-radius:7px;box-sizing:border-box;background:#fff;overflow:hidden">
<div class="b" style="left:4px;top:4px;width:52px;height:28px;background:#f2f2f8"></div>
<div class="b" style="left:4px;top:32px;width:52px;height:24px;background:#898d9b;border-radius:0 0 6px 6px"></div>
<svg class="b" style="left:24.6px;top:18px" width="10" height="12" viewBox="0 0 10 12"><path d="M1.6,2 H6 L8.4,4.4 V10 H1.6 Z" fill="#d0d1da"/><path d="M6,2 V4.4 H8.4 Z" fill="#e9e9ef"/></svg></div>
<div class="t" style="left:1405.00px;top:982.60px;font-size:16px;line-height:16px;color:#fff;font-weight:700;letter-spacing:-1.150px;">PDF</div>
<div class="t" style="left:1641.20px;top:962.50px;font-size:29px;line-height:29px;color:#2c3345;font-weight:400;letter-spacing:-0.477px;">Dear Responsible, This i...</div>
<div class="b" style="left:2010px;top:936px;width:138px;height:78px;overflow:hidden"><div class="b" style="left:-2010px;top:-936px;width:2164px;height:1268px"><div class="t" style="left:2041.80px;top:962.00px;font-size:29px;line-height:29px;color:#2c3345;font-weight:400;letter-spacing:0.350px;">02/10/2020</div></div></div>
<div class="t" style="left:49.80px;top:1043.80px;font-size:26px;line-height:26px;color:#7d8195;font-weight:400;letter-spacing:0.000px;">8</div>
<svg class="b" style="left:104px;top:1035.7px;" width="36" height="36" viewBox="0 0 36 36"><path d="M18,2.6 L22.6,13.3 L34.3,14.3 L25.5,22.2 L28.3,33.6 L18,27.6 L7.7,33.6 L10.5,22.2 L1.7,14.3 L13.4,13.3 Z" fill="#fff" stroke="#a8abbb" stroke-width="2.2"/></svg>
<div class="t" style="left:220.50px;top:1042.00px;font-size:29px;line-height:29px;color:#2c3345;font-weight:400;letter-spacing:-0.300px;">Amber Smith</div>
<div class="b" style="left:508px;top:1028px;width:258px;height:54px;background:#e4e7f0;border-radius:6px"></div>
<div class="b" style="left:508px;top:1028px;width:258px;height:54px;overflow:hidden"><div class="b" style="left:-508px;top:-1028px;width:2164px;height:1268px"><div class="t" style="left:523.30px;top:1040.20px;font-size:29px;line-height:29px;color:#2c3345;font-weight:400;letter-spacing:-0.907px;">Human Resources</div></div></div>
<div class="b" style="left:774px;top:1028px;width:148px;height:54px;background:#e4e7f0;border-radius:6px 0 0 6px"></div>
<div class="b" style="left:774px;top:1028px;width:148px;height:54px;overflow:hidden"><div class="b" style="left:-774px;top:-1028px;width:2164px;height:1268px"><div class="t" style="left:790.10px;top:1040.20px;font-size:29px;line-height:29px;color:#2c3345;font-weight:400;letter-spacing:0.100px;">HR Manager</div></div></div>
<div class="b" style="left:988px;top:1028px;width:264px;height:54px;background:#ddd4f9;border-radius:6px"></div>
<div class="t" style="left:1004.80px;top:1042.00px;font-size:29px;line-height:29px;color:#2c3345;font-weight:400;letter-spacing:-0.221px;">Company Website</div>
<div class="b" style="left:1388px;top:1024px;width:64px;height:64px;border:2px solid #c6cada;border-radius:7px;box-sizing:border-box;background:#fff;overflow:hidden">
<div class="b" style="left:4px;top:4px;width:52px;height:28px;background:#f2f2f8"></div>
<div class="b" style="left:4px;top:32px;width:52px;height:24px;background:#898d9b;border-radius:0 0 6px 6px"></div>
<svg class="b" style="left:24.6px;top:18px" width="10" height="12" viewBox="0 0 10 12"><path d="M1.6,2 H6 L8.4,4.4 V10 H1.6 Z" fill="#d0d1da"/><path d="M6,2 V4.4 H8.4 Z" fill="#e9e9ef"/></svg></div>
<div class="t" style="left:1405.00px;top:1062.60px;font-size:16px;line-height:16px;color:#fff;font-weight:700;letter-spacing:-1.150px;">PDF</div>
<div class="t" style="left:1641.20px;top:1042.50px;font-size:29px;line-height:29px;color:#2c3345;font-weight:400;letter-spacing:-0.348px;">Hello, I am a fast and ac...</div>
<div class="b" style="left:2010px;top:1016px;width:138px;height:78px;overflow:hidden"><div class="b" style="left:-2010px;top:-1016px;width:2164px;height:1268px"><div class="t" style="left:2041.80px;top:1042.00px;font-size:29px;line-height:29px;color:#2c3345;font-weight:400;letter-spacing:0.350px;">02/03/2020</div></div></div>
<div class="t" style="left:50.30px;top:1123.80px;font-size:26px;line-height:26px;color:#7d8195;font-weight:400;letter-spacing:0.000px;">9</div>
<svg class="b" style="left:104px;top:1115.7px;" width="36" height="36" viewBox="0 0 36 36"><path d="M18,2.6 L22.6,13.3 L34.3,14.3 L25.5,22.2 L28.3,33.6 L18,27.6 L7.7,33.6 L10.5,22.2 L1.7,14.3 L13.4,13.3 Z" fill="#fff" stroke="#a8abbb" stroke-width="2.2"/></svg>
<div class="t" style="left:218.50px;top:1122.00px;font-size:29px;line-height:29px;color:#2c3345;font-weight:400;letter-spacing:-0.245px;">Nancy Stuart</div>
<div class="b" style="left:508px;top:1108px;width:162px;height:54px;background:#e4e7f0;border-radius:6px"></div>
<div class="b" style="left:508px;top:1108px;width:162px;height:54px;overflow:hidden"><div class="b" style="left:-508px;top:-1108px;width:2164px;height:1268px"><div class="t" style="left:523.00px;top:1120.20px;font-size:29px;line-height:29px;color:#2c3345;font-weight:400;letter-spacing:0.438px;">Marketing</div></div></div>
<div class="b" style="left:678px;top:1108px;width:244px;height:54px;background:#e4e7f0;border-radius:6px 0 0 6px"></div>
<div class="b" style="left:678px;top:1108px;width:244px;height:54px;overflow:hidden"><div class="b" style="left:-678px;top:-1108px;width:2164px;height:1268px"><div class="t" style="left:692.80px;top:1120.20px;font-size:29px;line-height:29px;color:#2c3345;font-weight:400;letter-spacing:0.256px;">Digital Marketing Manager</div></div></div>
<div class="b" style="left:988px;top:1108px;width:194px;height:54px;background:#f6dbef;border-radius:6px"></div>
<div class="t" style="left:1004.80px;top:1122.00px;font-size:29px;line-height:29px;color:#2c3345;font-weight:400;letter-spacing:-0.382px;">Social Media</div>
<div class="b" style="left:1388px;top:1104px;width:64px;height:64px;border:2px solid #c6cada;border-radius:7px;box-sizing:border-box;background:#fff;overflow:hidden">
<div class="b" style="left:4px;top:4px;width:52px;height:28px;background:#f2f2f8"></div>
<div class="b" style="left:4px;top:32px;width:52px;height:24px;background:#898d9b;border-radius:0 0 6px 6px"></div>
<svg class="b" style="left:24.6px;top:18px" width="10" height="12" viewBox="0 0 10 12"><path d="M1.6,2 H6 L8.4,4.4 V10 H1.6 Z" fill="#d0d1da"/><path d="M6,2 V4.4 H8.4 Z" fill="#e9e9ef"/></svg></div>
<div class="t" style="left:1405.00px;top:1142.60px;font-size:16px;line-height:16px;color:#fff;font-weight:700;letter-spacing:-1.150px;">PDF</div>
<div class="t" style="left:1641.20px;top:1122.50px;font-size:29px;line-height:29px;color:#2c3345;font-weight:400;letter-spacing:-0.368px;">Hello, This is Nancy. I ha...</div>
<div class="b" style="left:2010px;top:1096px;width:138px;height:78px;overflow:hidden"><div class="b" style="left:-2010px;top:-1096px;width:2164px;height:1268px"><div class="t" style="left:2041.80px;top:1122.00px;font-size:29px;line-height:29px;color:#2c3345;font-weight:400;letter-spacing:0.350px;">03/16/2020</div></div></div>
</div></body></html>
